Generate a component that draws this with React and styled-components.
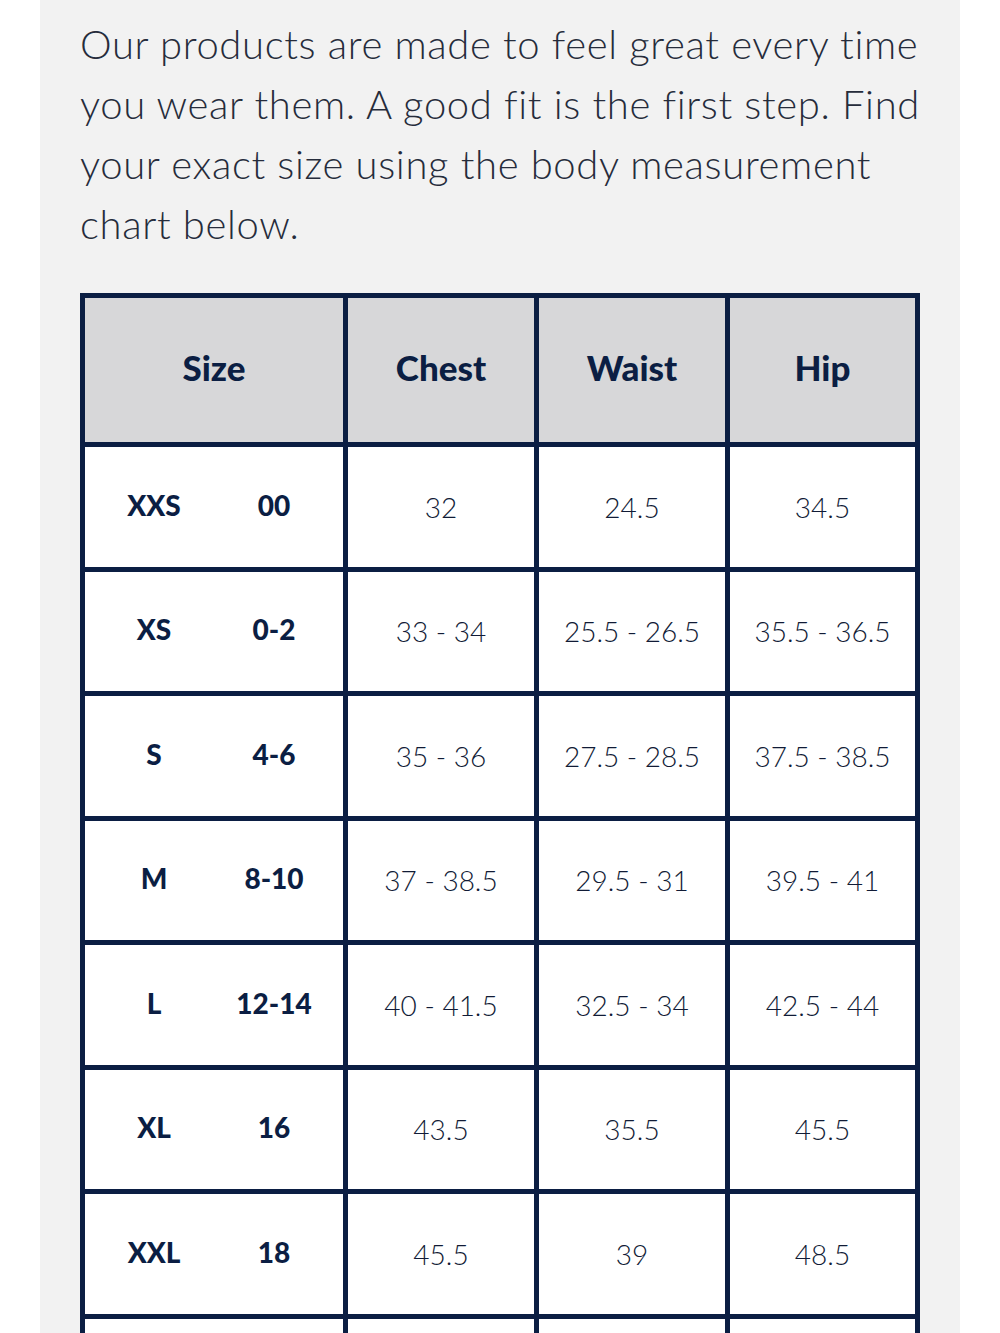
import React from "react";
import styled, { createGlobalStyle } from "styled-components";

const Global = createGlobalStyle`
  html, body { margin: 0; padding: 0; background: #ffffff; }
  body { font-family: Lato, "Noto Sans", sans-serif; }
`;

const Panel = styled.section`
  margin: 0 40px;
  background: #f2f2f2;
  padding: 14px 40px 40px;
  min-height: 1333px;
  box-sizing: border-box;
`;

const Intro = styled.p`
  margin: 0 0 39px;
  font-family: Lato, sans-serif;
  font-weight: 300;
  font-size: 40px;
  line-height: 60px;
  color: #262c3b;
  letter-spacing: 0.65px;
`;

const Grid = styled.div`
  display: grid;
  grid-template-columns: 258px 186px 186px 185px;
  grid-auto-rows: 119.5px;
  grid-template-rows: 144px;
  gap: 5px;
  padding: 5px;
  background: #0b1e43;
  width: 840px;
  box-sizing: border-box;
`;

const Head = styled.div`
  background: #d7d7d9;
  display: flex;
  align-items: center;
  justify-content: center;
  padding-bottom: 6px;
  font-family: Lato, sans-serif;
  font-weight: 900;
  font-size: 35px;
  color: #0b1e43;
`;

const Cell = styled.div`
  background: #ffffff;
  display: flex;
  align-items: center;
  justify-content: center;
  font-family: Lato, sans-serif;
  font-weight: 300;
  font-size: 28px;
  color: #111b36;
`;

const SizeCell = styled.div`
  background: #ffffff;
  display: grid;
  grid-template-columns: 120px 120px;
  justify-content: center;
  align-items: center;
  padding-bottom: 4px;
  font-family: Lato, sans-serif;
  font-weight: 900;
  font-size: 28px;
  color: #0b1e43;
`;

const SizeLabel = styled.span`
  text-align: center;
`;

const rows = [
  ["XXS", "00", "32", "24.5", "34.5"],
  ["XS", "0-2", "33 - 34", "25.5 - 26.5", "35.5 - 36.5"],
  ["S", "4-6", "35 - 36", "27.5 - 28.5", "37.5 - 38.5"],
  ["M", "8-10", "37 - 38.5", "29.5 - 31", "39.5 - 41"],
  ["L", "12-14", "40 - 41.5", "32.5 - 34", "42.5 - 44"],
  ["XL", "16", "43.5", "35.5", "45.5"],
  ["XXL", "18", "45.5", "39", "48.5"],
  ["", "", "", "", ""],
];

export default function App() {
  return (
    <>
      <Global />
      <Panel>
        <Intro>
          Our products are made to feel great every time you wear them. A good
          fit is the first step. Find your exact size using the body
          measurement chart below.
        </Intro>
        <Grid>
          <Head>Size</Head>
          <Head>Chest</Head>
          <Head>Waist</Head>
          <Head>Hip</Head>
          {rows.map(([a, b, c, w, h], i) => (
            <React.Fragment key={i}>
              <SizeCell>
                <SizeLabel>{a}</SizeLabel>
                <SizeLabel>{b}</SizeLabel>
              </SizeCell>
              <Cell>{c}</Cell>
              <Cell>{w}</Cell>
              <Cell>{h}</Cell>
            </React.Fragment>
          ))}
        </Grid>
      </Panel>
    </>
  );
}
